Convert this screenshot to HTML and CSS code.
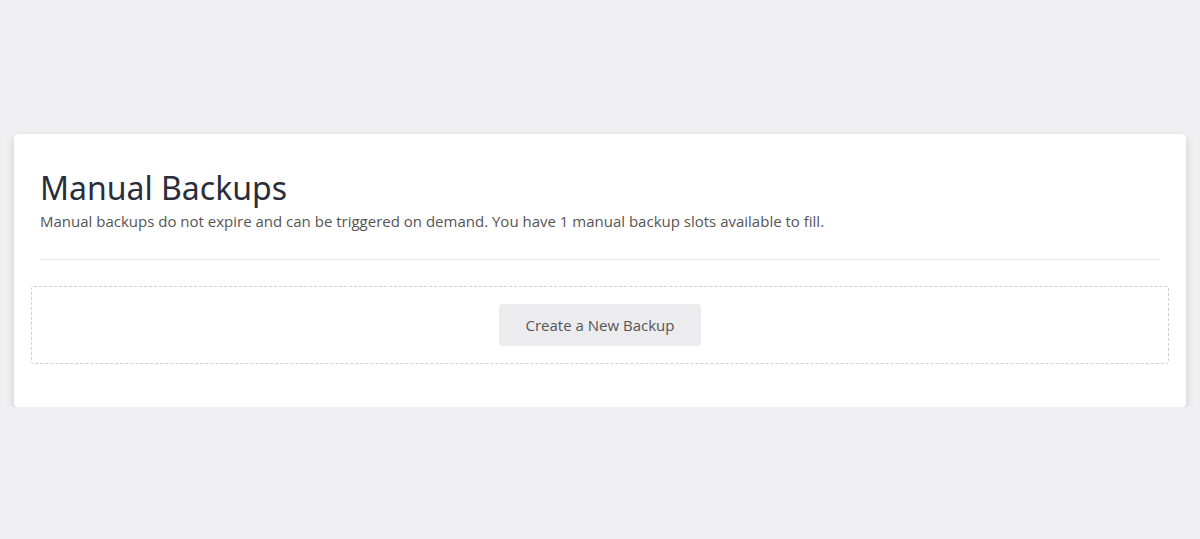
FILE: index.html
```html
<!DOCTYPE html>
<html lang="en">
<head>
  <meta charset="UTF-8">
  <title>Manual Backups</title>
  <link rel="stylesheet" href="styles.css">
</head>
<body>
  <div class="page">
    <section class="card">
      <div class="card-header">
        <h1 class="card-title">Manual Backups</h1>
        <p class="card-desc">Manual backups do not expire and can be triggered on demand. You have 1 manual backup slots available to fill.</p>
      </div>
      <div class="slot">
        <button class="btn">Create a New Backup</button>
      </div>
    </section>
  </div>
</body>
</html>
```

FILE: styles.css
```css
body {
  margin: 0;
  background: #f0f0f2;
  font-family: "Open Sans", "Noto Sans", sans-serif;
  color: #333;
}

.page {
  padding: 134px 14px 0 14px;
}

.card {
  background: #fff;
  border-radius: 4px;
  box-shadow: 0 3px 10px rgba(0, 0, 0, 0.14);
  padding: 0 17px 43px 17px;
}

.card-header {
  margin: 0 9px;
  padding-top: 34px;
  padding-bottom: 27px;
  border-bottom: 1px solid #e6e6e8;
}

.card-title {
  margin: 0;
  font-family: "Noto Sans", sans-serif;
  font-weight: 400;
  font-size: 32px;
  line-height: 40px;
  color: #2a2d3a;
}

.card-desc {
  margin: 2px 0 0 0;
  font-size: 15px;
  line-height: 22px;
  color: #555;
}

.slot {
  margin-top: 26px;
  border: 1px dashed #cfcfd2;
  border-radius: 3px;
  padding: 17px 0;
  display: flex;
  justify-content: center;
}

.btn {
  font-family: "Open Sans", "Noto Sans", sans-serif;
  font-size: 15px;
  color: #555;
  background: #ececee;
  border: none;
  border-radius: 4px;
  width: 202px;
  height: 42px;
  cursor: pointer;
}
```
